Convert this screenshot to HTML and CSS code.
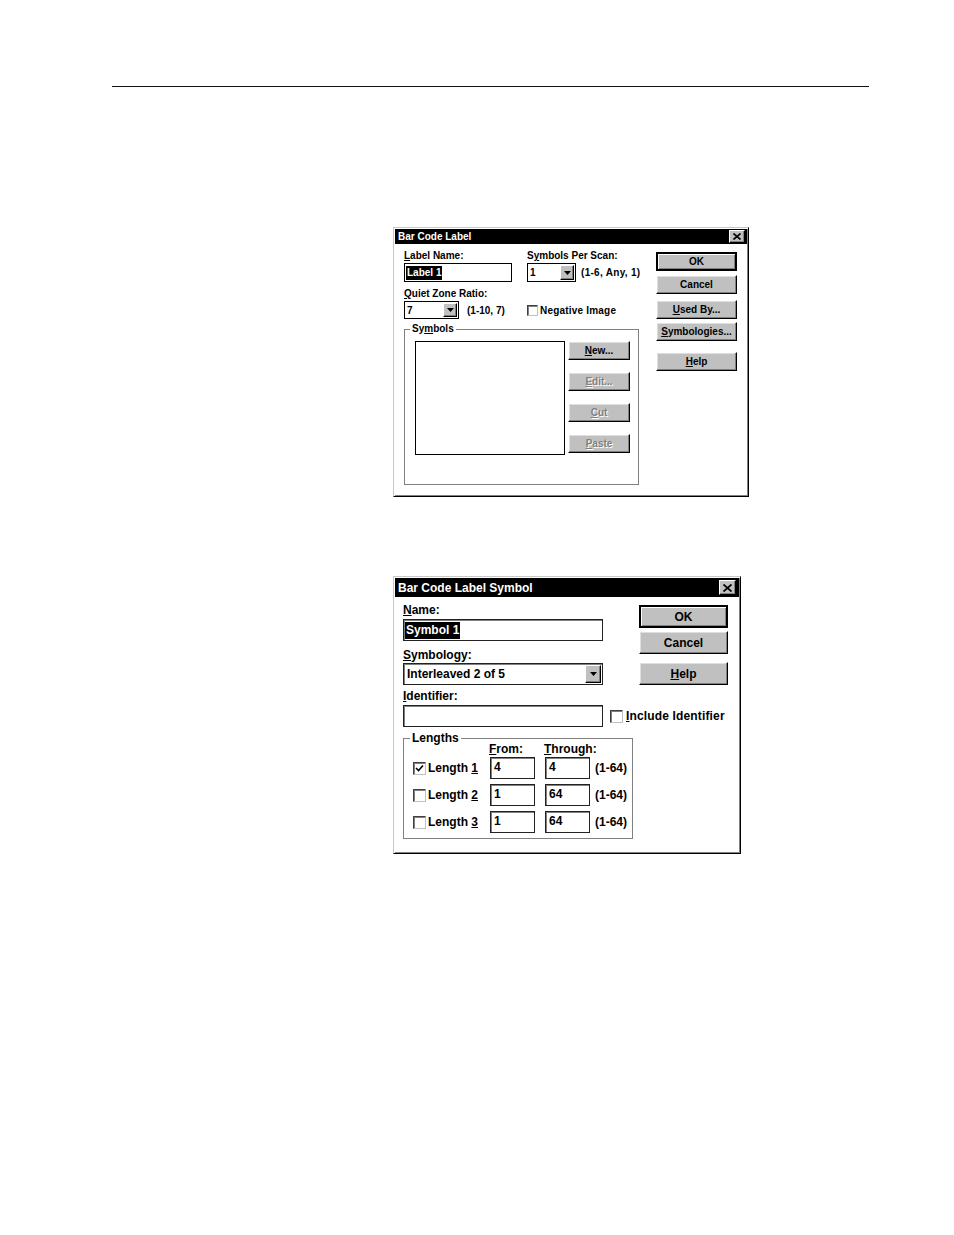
FILE: index.html
```html
<!DOCTYPE html>
<html>
<head>
<meta charset="utf-8">
<link rel="stylesheet" href="styles.css">
</head>
<body>
<div class="page">
  <div class="rule"></div>

  <div class="win d1">
    <div class="title">
      <span>Bar Code Label</span>
      <span class="close"><svg width="8" height="7" viewBox="0 0 8 7"><path d="M0.5 0.5 L7.5 6.5 M7.5 0.5 L0.5 6.5" stroke="#000" stroke-width="1.6" fill="none"/></svg></span>
    </div>
    <div class="body1">
      <div class="left1">
        <div class="row">
          <div class="fa">
            <span class="lbl"><u>L</u>abel Name:</span>
            <div class="tb"><span class="sel">Label 1</span></div>
          </div>
          <div class="fb">
            <span class="lbl">S<u>y</u>mbols Per Scan:</span>
            <div class="crow">
              <div class="cb cb1"><span>1</span><span class="ddb"><svg width="7" height="4" viewBox="0 0 7 4"><path d="M0 0 H7 L3.5 4 Z" fill="#000"/></svg></span></div>
              <span class="hint h1">(1-6, Any, 1)</span>
            </div>
          </div>
        </div>
        <div class="row2">
          <span class="lbl"><u>Q</u>uiet Zone Ratio:</span>
          <div class="crow">
            <div class="qpart">
              <div class="cb cb7"><span>7</span><span class="ddb"><svg width="7" height="4" viewBox="0 0 7 4"><path d="M0 0 H7 L3.5 4 Z" fill="#000"/></svg></span></div>
              <span class="hint h2">(1-10, 7)</span>
            </div>
            <span class="chk chk1"></span><span class="chklbl1">Negative Image</span>
          </div>
        </div>
        <fieldset class="grp1">
          <legend>Sy<u>m</u>bols</legend>
          <div class="grp1in">
            <div class="listbox"></div>
            <div class="btncol1">
              <div class="btn b1"><span><u>N</u>ew...</span></div>
              <div class="btn b1 dis"><span><u>E</u>dit...</span></div>
              <div class="btn b1 dis"><span><u>C</u>ut</span></div>
              <div class="btn b1 dis"><span><u>P</u>aste</span></div>
            </div>
          </div>
        </fieldset>
      </div>
      <div class="right1">
        <div class="btn b1 def ok1">OK</div>
        <div class="btn b1 m4">Cancel</div>
        <div class="btn b1 m6"><span><u>U</u>sed By...</span></div>
        <div class="btn b1 m3"><span><u>S</u>ymbologies...</span></div>
        <div class="btn b1 m11"><span><u>H</u>elp</span></div>
      </div>
    </div>
  </div>

  <div class="win d2">
    <div class="title">
      <span>Bar Code Label Symbol</span>
      <span class="close"><svg width="9" height="8" viewBox="0 0 9 8"><path d="M0.5 0.5 L8.5 7.5 M8.5 0.5 L0.5 7.5" stroke="#000" stroke-width="1.8" fill="none"/></svg></span>
    </div>
    <div class="body2">
      <div class="top2">
        <div class="left2">
          <span class="lbl2"><u>N</u>ame:</span>
          <div class="tb2"><span class="sel2">Symbol 1</span></div>
          <span class="lbl2 mt7"><u>S</u>ymbology:</span>
          <div class="cb2"><span>Interleaved 2 of 5</span><span class="ddb2"><svg width="7" height="4" viewBox="0 0 7 4"><path d="M0 0 H7 L3.5 4 Z" fill="#000"/></svg></span></div>
        </div>
        <div class="right2">
          <div class="btn b2 def ok2">OK</div>
          <div class="btn b2 m3b">Cancel</div>
          <div class="btn b2 m8"><span><u>H</u>elp</span></div>
        </div>
      </div>
      <span class="lbl2 mt4"><u>I</u>dentifier:</span>
      <div class="idrow">
        <div class="tb2 idtb"></div>
        <span class="chk chk2"></span><span class="chklbl2"><u>I</u>nclude Identifier</span>
      </div>
      <fieldset class="grp2">
        <legend>Lengths</legend>
        <div class="lhdr"><span class="hf"><u>F</u>rom:</span><span class="ht"><u>T</u>hrough:</span></div>
        <div class="lgrid">
          <span class="lenlbl"><span class="chk chk2"><svg width="9" height="9" viewBox="0 0 9 9"><path d="M1 4 L3.5 6.5 L8 1.5" stroke="#000" stroke-width="1.6" fill="none"/></svg></span><span class="lentxt">Length <u>1</u></span></span>
          <div class="num">4</div><div class="num">4</div><span class="hint2">(1-64)</span>

          <span class="lenlbl"><span class="chk chk2"></span><span class="lentxt">Length <u>2</u></span></span>
          <div class="num">1</div><div class="num">64</div><span class="hint2">(1-64)</span>

          <span class="lenlbl"><span class="chk chk2"></span><span class="lentxt">Length <u>3</u></span></span>
          <div class="num">1</div><div class="num">64</div><span class="hint2">(1-64)</span>
        </div>
      </fieldset>
    </div>
  </div>
</div>
</body>
</html>
```

FILE: styles.css
```css
* { box-sizing: border-box; }
body {
  margin: 0;
  background: #fff;
  font-family: "Liberation Sans", Arial, sans-serif;
  font-weight: bold;
  color: #000;
}
.page { width: 954px; height: 1235px; padding-top: 86px; overflow: hidden; }
.rule { margin-left: 112px; width: 757px; height: 0; border-top: 1px solid #111; }

u { text-decoration: underline; text-underline-offset: 1px; text-decoration-thickness: 1px; }

.win {
  margin-left: 393px;
  background: #fff;
  border: 1px solid;
  border-color: #c8c8c8 #000 #000 #c8c8c8;
  padding: 1px;
  box-shadow: inset 1px 1px 0 #fff, inset -1px -1px 0 #808080;
}
.d1 { width: 356px; height: 270px; margin-top: 140px; }
.d2 { width: 348px; height: 278px; margin-top: 79px; }

.title {
  background: #000;
  color: #fff;
  display: flex;
  align-items: center;
  justify-content: space-between;
  white-space: nowrap;
}
.d1 .title { height: 15px; font-size: 10px; padding: 0 2px 0 3px; }
.d2 .title { height: 19px; font-size: 12px; padding: 0 3px 0 3px; }

.close {
  display: flex;
  align-items: center;
  justify-content: center;
  background: #c0c0c0;
  border: 1px solid;
  border-color: #fff #000 #000 #fff;
  box-shadow: inset -1px -1px 0 #808080;
}
.d1 .close { width: 16px; height: 13px; }
.d2 .close { width: 17px; height: 15px; }

/* ---------- dialog 1 ---------- */
.body1 { display: flex; padding: 6px 0 0 9px; font-size: 10px; white-space: nowrap; }
.left1 { width: 235px; flex: none; }
.right1 { width: 81px; margin-left: 17px; display: flex; flex-direction: column; flex: none; }

.lbl { display: block; height: 12px; line-height: 12px; font-size: 10px; }
.row { display: flex; }
.fa { width: 108px; flex: none; }
.fb { margin-left: 15px; flex: none; }
.tb {
  margin-top: 1px;
  height: 19px;
  border: 1px solid #000;
  display: flex;
  align-items: center;
  padding: 0 1px;
}
.sel { background: #000; color: #fff; padding: 0 1px; line-height: 14px; }

.crow { display: flex; align-items: center; margin-top: 1px; }
.cb {
  display: flex;
  align-items: center;
  justify-content: space-between;
  border: 1px solid #000;
  padding: 1px 1px 1px 2px;
  flex: none;
}
.cb1 { width: 49px; height: 19px; }
.cb7 { width: 55px; height: 18px; }
.ddb {
  display: flex;
  align-items: center;
  justify-content: center;
  background: #c0c0c0;
  border: 1px solid;
  border-color: #fff #000 #000 #fff;
  box-shadow: inset -1px -1px 0 #808080;
  width: 14px;
  height: 100%;
}
.hint { font-size: 10px; }
.h1 { margin-left: 5px; letter-spacing: 0.3px; }
.h2 { margin-left: 8px; }
.row2 { margin-top: 6px; }
.qpart { width: 123px; display: flex; align-items: center; flex: none; }

.chk {
  display: inline-flex;
  align-items: center;
  justify-content: center;
  background: #fff;
  border: 1px solid;
  border-color: #404040 #c0c0c0 #c0c0c0 #404040;
  box-shadow: inset 1px 1px 0 #808080;
  flex: none;
}
.chk1 { width: 11px; height: 11px; }
.chklbl1 { margin-left: 2px; letter-spacing: 0.2px; }

.grp1 {
  margin: 4px 0 0 0;
  padding: 0;
  width: 235px;
  height: 162px;
  border: 1px solid #808080;
  min-width: 0;
}
.grp1 legend { margin-left: 5px; padding: 0 2px; font-size: 10px; line-height: 12px; }
.grp1in { display: flex; padding: 6px 0 0 10px; }
.listbox { width: 150px; height: 114px; border: 1px solid #000; background: #fff; flex: none; }
.btncol1 { margin-left: 3px; display: flex; flex-direction: column; gap: 12px; width: 62px; flex: none; }

.btn {
  display: flex;
  align-items: center;
  justify-content: center;
  background: #c0c0c0;
  border: 1px solid;
  border-color: #fff #000 #000 #fff;
  box-shadow: inset -1px -1px 0 #808080, inset 1px 1px 0 #dfdfdf;
  white-space: nowrap;
}
.b1 { height: 19px; font-size: 10px; }
.btn.def { border: 2px solid #000; border-color: #000; box-shadow: inset 1px 1px 0 #fff, inset -1px -1px 0 #808080; }
.dis { color: #808080; text-shadow: 1px 1px 0 #fff; }
.ok1 { margin-top: 2px; }
.m4 { margin-top: 4px; }
.m6 { margin-top: 6px; }
.m3 { margin-top: 3px; }
.m11 { margin-top: 11px; }

/* ---------- dialog 2 ---------- */
.body2 { padding: 6px 0 0 8px; font-size: 12px; white-space: nowrap; }
.top2 { display: flex; }
.left2 { width: 200px; display: flex; flex-direction: column; flex: none; }
.right2 { width: 89px; margin-left: 36px; display: flex; flex-direction: column; flex: none; }
.lbl2 { display: block; height: 14px; line-height: 14px; font-size: 12px; }
.mt7 { margin-top: 7px; }
.mt4 { margin-top: 4px; }
.tb2 {
  margin-top: 2px;
  height: 22px;
  width: 200px;
  border: 1px solid #222;
  box-shadow: inset 1px 1px 0 #808080;
  display: flex;
  align-items: center;
  padding: 0 1px;
  flex: none;
}
.sel2 { background: #000; color: #fff; padding: 0 1px; line-height: 17px; }
.cb2 {
  margin-top: 1px;
  height: 22px;
  width: 200px;
  border: 1px solid #222;
  box-shadow: inset 1px 1px 0 #808080;
  display: flex;
  align-items: center;
  justify-content: space-between;
  padding: 1px 1px 1px 3px;
}
.ddb2 {
  display: flex;
  align-items: center;
  justify-content: center;
  width: 16px;
  height: 18px;
  background: #c0c0c0;
  border: 1px solid;
  border-color: #fff #000 #000 #fff;
  box-shadow: inset -1px -1px 0 #808080;
}
.b2 { height: 23px; font-size: 12px; }
.ok2 { margin-top: 2px; }
.m3b { margin-top: 3px; }
.m8 { margin-top: 8px; }

.idrow { display: flex; align-items: center; }
.chk2 { width: 13px; height: 13px; }
.idrow .chk2 { margin-left: 7px; margin-top: 2px; }
.chklbl2 { margin-left: 3px; margin-top: 2px; letter-spacing: 0.15px; }

.grp2 {
  margin: 4px 0 0 0;
  padding: 0;
  width: 230px;
  height: 108px;
  border: 1px solid #808080;
  min-width: 0;
}
.grp2 legend { margin-left: 6px; padding: 0 2px; font-size: 12px; line-height: 14px; }
.lhdr { display: flex; height: 12px; line-height: 12px; padding-left: 85px; margin-top: -2px; }
.hf { width: 55px; }
.lgrid {
  display: grid;
  grid-template-columns: 77px 55px 49px auto;
  grid-template-rows: 22px 22px 22px;
  row-gap: 5px;
  align-items: center;
  padding-left: 9px;
  margin-top: 2px;
}
.lenlbl { display: flex; align-items: center; }
.lentxt { margin-left: 2px; }
.num {
  width: 45px;
  height: 22px;
  border: 1px solid #222;
  box-shadow: inset 1px 1px 0 #808080;
  padding: 2px 0 0 3px;
  line-height: 14px;
}
.hint2 { font-size: 12px; margin-left: 1px; }
```
